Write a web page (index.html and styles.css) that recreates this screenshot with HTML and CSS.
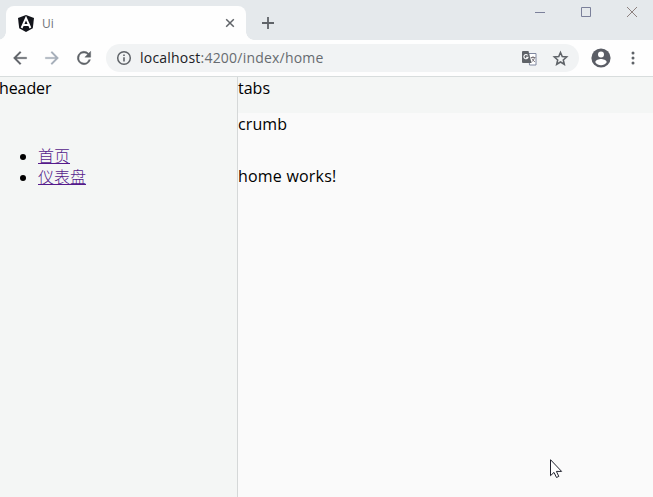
FILE: index.html
```html
<!DOCTYPE html>
<html lang="zh-CN">
<head>
<meta charset="utf-8">
<title>Ui</title>
<link rel="stylesheet" href="styles.css">
</head>
<body>
<div class="browser">
  <div class="tabstrip">
    <div class="tab">
      <svg class="logo" width="16" height="17" viewBox="0 0 16 17"><path fill="#12141a" d="M8 0 16 3 14.8 13.200 8 17 1.200 13.200 0 3z"/><path fill="none" stroke="#fff" stroke-width="1.900" d="M3.600 13 8 3l4.400 10M5.500 10h5"/></svg>
      <span class="tab-title">Ui</span>
      <svg class="tab-close" width="10" height="10" viewBox="0 0 10 10"><path fill="none" stroke="#5f6368" stroke-width="1.500" d="m1.200 1.200 7.600 7.600m0-7.600L1.200 8.800"/></svg>
    </div>
    <svg class="new-tab" width="12" height="12" viewBox="0 0 12 12"><path fill="none" stroke="#5f6368" stroke-width="1.800" d="M6 0v12M0 6h12"/></svg>
    <div class="window-buttons">
      <svg width="12" height="12" viewBox="0 0 12 12"><path stroke="#7b809a" d="M1 6.500h10"/></svg>
      <svg width="12" height="12" viewBox="0 0 12 12"><path fill="none" stroke="#7b809a" d="M1.500 1.500h9v9h-9z"/></svg>
      <svg width="12" height="12" viewBox="0 0 12 12"><path fill="none" stroke="#8d817f" d="m1 1 10 10m0-10L1 11"/></svg>
    </div>
  </div>
  <div class="toolbar">
    <svg class="nav-icon" width="20" height="20" viewBox="0 0 24 24"><path fill="#5f6368" stroke="#5f6368" stroke-width=".3" d="M20 11H7.830l5.590-5.590L12 4l-8 8 8 8 1.410-1.410L7.830 13H20z"/></svg>
    <svg class="nav-icon" width="20" height="20" viewBox="0 0 24 24"><path fill="#a5aeb9" stroke="#a5aeb9" stroke-width=".3" d="m12 4-1.410 1.410L16.170 11H4v2h12.170l-5.580 5.590L12 20l8-8z"/></svg>
    <svg class="nav-icon" width="20" height="20" viewBox="0 0 24 24"><path fill="#5f6368" stroke="#5f6368" stroke-width=".5" d="M17.650 6.350A8 8 0 1 0 19.730 14h-2.080A6 6 0 1 1 12 6c1.660 0 3.140.69 4.220 1.780L13 11h7V4z"/></svg>
    <div class="address">
      <svg class="info" width="16" height="16" viewBox="0 0 16 16"><circle cx="8" cy="8" r="6.300" fill="none" stroke="#5f6368" stroke-width="1.500"/><path stroke="#5f6368" stroke-width="1.600" d="M8 7.200v4.200M8 4.500v1.600"/></svg>
      <span class="url"><span class="host">localhost</span>:4200/index/home</span>
      <svg class="translate" width="15" height="15" viewBox="0 0 15 15"><path fill="#fff" stroke="#8088a0" d="M6.500 2.500h7.500v11.500H7.500z"/><path fill="#5f6368" d="M1 0h5.500l3 12H1a1 1 0 0 1-1-1V1a1 1 0 0 1 1-1z"/><path fill="none" stroke="#fff" stroke-width="1.100" d="M5.600 4.300A2.100 2.100 0 1 0 6 6.300H4"/><path fill="none" stroke="#7d777c" d="M8.800 6.500h4.700M11 5.200v1.300M12.500 6.500c-.4 2-1.500 3.500-3 4.500M9.800 7.500l3 3.500"/></svg>
      <svg class="star" width="17" height="17" viewBox="0 0 24 24"><path fill="none" stroke="#5f6368" stroke-width="2.200" d="m12 3.500 2.450 5.800 6.250.55-4.750 4.150 1.450 6.150L12 16.900l-5.400 3.250L8.050 14 3.300 9.850l6.250-.55z"/></svg>
    </div>
    <svg class="avatar" width="20" height="20" viewBox="0 0 20 20"><circle cx="10" cy="10" r="9.600" fill="#5a5d65"/><circle cx="10" cy="6.500" r="3" fill="#fff"/><path fill="#fff" d="M4.300 14.200c0-2 3.800-3.100 5.700-3.100s5.700 1.100 5.700 3.100a6.900 6.900 0 0 1-11.400 0z"/></svg>
    <svg class="menu" width="4" height="14" viewBox="0 0 4 14"><g fill="#5f6368"><circle cx="2" cy="2" r="1.500"/><circle cx="2" cy="7" r="1.500"/><circle cx="2" cy="12" r="1.500"/></g></svg>
  </div>
</div>
<div class="page">
  <aside class="sidebar">
    <div class="header">header</div>
    <ul class="nav">
      <li><a href="#">首页</a></li>
      <li><a href="#">仪表盘</a></li>
    </ul>
  </aside>
  <main class="content">
    <div class="tabs">tabs</div>
    <div class="crumb">crumb</div>
    <p class="home">home works!</p>
  </main>
</div>
<svg class="cursor" width="13" height="20" viewBox="0 0 13 20"><path fill="#fff" stroke="#20222e" d="M.5.700v16l3.500-3.300 2.500 5.100 2.300-1.100-2.400-5h5.200z"/></svg>
</body>
</html>
```

FILE: styles.css
```css
* { box-sizing: border-box; }
body {
  margin: 0;
  width: 653px;
  height: 497px;
  overflow: hidden;
  font: 16px/21px "Open Sans", "Noto Sans CJK SC", sans-serif;
  color: #000;
  background: #fafafa;
}
svg { display: block; flex: none; }
.tabstrip {
  height: 40px;
  display: flex;
  background: #e5e9ec;
}
.tab {
  position: relative;
  width: 240px;
  height: 34px;
  margin: 6px 0 0 6px;
  padding: 0 11px 0 12px;
  display: flex;
  align-items: center;
  background: #fefefe;
  border-radius: 8px 8px 0 0;
}
.tab::before, .tab::after {
  content: "";
  position: absolute;
  bottom: 0;
  width: 8px;
  height: 8px;
}
.tab::before { left: -8px; background: radial-gradient(circle at 0 0, transparent 7.500px, #fefefe 8px); }
.tab::after { right: -8px; background: radial-gradient(circle at 100% 0, transparent 7.500px, #fefefe 8px); }
.tab-title {
  margin-left: 8px;
  font-size: 12px;
  color: #6f7378;
}
.tab-close { margin-left: auto; }
.new-tab { margin: 17px 0 0 16px; }
.window-buttons {
  display: flex;
  gap: 34px;
  margin: 6px 15px 0 auto;
}
.toolbar {
  height: 36px;
  padding: 0 18px 0 10px;
  display: flex;
  align-items: center;
  background: #fefefe;
}
.nav-icon { margin-right: 12px; }
.address {
  width: 473px;
  height: 28px;
  padding: 0 10px;
  display: flex;
  align-items: center;
  border-radius: 14px;
  background: #f1f3f4;
}
.url {
  margin-left: 8px;
  padding-bottom: 2px;
  font-size: 14px;
  letter-spacing: 0.21px;
  color: #676b70;
}
.host { color: #202124; }
.translate { margin-left: auto; }
.star { margin-left: 15px; }
.avatar { margin-left: 12px; }
.menu { margin-left: auto; }
.page {
  height: 421px;
  display: flex;
  border-top: 1px solid #d8dddd;
}
.sidebar {
  width: 238px;
  background: #f4f6f5;
  border-right: 1px solid #d5d8d8;
}
.header { height: 53px; margin-left: -1px; padding-top: 1px; letter-spacing: -0.1px; }
.nav { margin: 16px 0; padding-left: 38px; }
.nav a { color: #551a8b; font-weight: 300; }
.content { flex: 1; }
.tabs { height: 36px; padding-top: 1px; background: #f4f6f5; }
.crumb { height: 36px; padding-top: 1px; letter-spacing: 0.1px; }
.home { margin: 16px 0; padding-top: 1px; letter-spacing: 0.2px; }
.cursor { position: absolute; left: 550px; top: 459px; }
```
